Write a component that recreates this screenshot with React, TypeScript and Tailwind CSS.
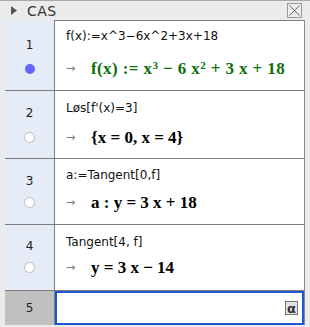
import React from 'react';

type Row = {
  n: number;
  input: string;
  output: React.ReactNode;
  active?: boolean;
  h: string;
  pt: string;
  gap: string;
  numMt: string;
  dotMt: string;
};

const sans = { fontFamily: '"DejaVu Sans", "Liberation Sans", sans-serif' };
const math = { fontFamily: '"Liberation Serif", "DejaVu Serif", serif' };

const rows: Row[] = [
  {
    n: 1,
    input: 'f(x):=x^3−6x^2+3x+18',
    active: true,
    h: 'h-[70px]',
    pt: 'pt-[7px]',
    gap: 'mt-[12px]',
    numMt: 'mt-[17px]',
    dotMt: 'mt-[11px]',
    output: (
      <span className="text-[#0b700b] tracking-[0.4px]">
        f(x) := x<sup className="text-[11px]">3</sup> − 6 x<sup className="text-[11px]">2</sup> + 3 x + 18
      </span>
    ),
  },
  {
    n: 2,
    input: 'Løs[f\'(x)=3]',
    h: 'h-[68px]',
    pt: 'pt-[9px]',
    gap: 'mt-[9px]',
    numMt: 'mt-[14px]',
    dotMt: 'mt-[11px]',
    output: <span>{'{'}x = 0, x = 4{'}'}</span>,
  },
  {
    n: 3,
    input: 'a:=Tangent[0,f]',
    h: 'h-[66px]',
    pt: 'pt-[8px]',
    gap: 'mt-[7px]',
    numMt: 'mt-[14px]',
    dotMt: 'mt-[8px]',
    output: <span>a : y = 3 x + 18</span>,
  },
  {
    n: 4,
    input: 'Tangent[4, f]',
    h: 'h-[66px]',
    pt: 'pt-[9px]',
    gap: 'mt-[5px]',
    numMt: 'mt-[13px]',
    dotMt: 'mt-[8px]',
    output: <span>y = 3 x − 14</span>,
  },
];

export default function App() {
  return (
    <div className="w-[310px] h-[327px] bg-[#ebebeb] overflow-hidden" style={sans}>
      {/* title bar */}
      <div className="h-[20px] border-t border-[#a8a8a8] flex items-center pl-[11px] pr-[8px]">
        <svg width="6" height="9" viewBox="0 0 6 9" className="mr-[10px]">
          <path d="M0 0 L6 4.5 L0 9 Z" fill="#555" />
        </svg>
        <span className="text-[14px] text-[#333] leading-none tracking-[0.5px]">CAS</span>
        <div className="ml-auto w-[15px] h-[15px] border border-[#9a9a9a] bg-[#ececec] flex items-center justify-center">
          <svg width="11" height="11" viewBox="0 0 11 11">
            <path d="M0.5 0.5 L10.5 10.5 M10.5 0.5 L0.5 10.5" stroke="#666" strokeWidth="1" />
          </svg>
        </div>
      </div>

      {/* cells */}
      <div className="mx-[5px] border-r border-[#8a8a8a]">
        {rows.map((r, i) => (
          <div key={r.n} className={`flex ${r.h} ${i > 0 ? 'border-t border-[#7d7d7d]' : ''}`}>
            <div className="w-[50px] shrink-0 bg-[#e5ecf7] border-r border-[#7d7d7d] flex flex-col items-center">
              <div className={`h-[16px] ${r.numMt} text-[12px] leading-[16px] text-[#222]`}>{r.n}</div>
              {r.active ? (
                <div className={`${r.dotMt} w-[10px] h-[10px] rounded-full bg-[#6464ff]`} />
              ) : (
                <div className={`${r.dotMt} w-[11px] h-[11px] rounded-full bg-white border border-[#bdbdbd]`} />
              )}
            </div>
            <div className={`flex-1 bg-white ${i === 0 ? 'border-t border-[#7d7d7d]' : ''} ${r.pt} pl-[11px]`}>
              <div className="h-[16px] text-[12px] leading-[16px] text-[#111] whitespace-pre">{r.input}</div>
              <div className={`${r.gap} flex items-center h-[26px]`}>
                <span className="text-[11px] text-[#7a7a7a] w-[25px]" style={sans}>→</span>
                <span className="text-[17px] font-bold text-black whitespace-pre" style={math}>
                  {r.output}
                </span>
              </div>
            </div>
          </div>
        ))}

        {/* input row */}
        <div className="flex h-[35px] border-t border-[#7d7d7d]">
          <div className="w-[50px] shrink-0 bg-[#c0c0c0] border-r border-[#7d7d7d] flex items-center justify-center text-[12px] text-[#222]">
            5
          </div>
          <div className="flex-1 bg-white border-2 border-[#1f56d2] flex items-center justify-end pr-[4px]">
            <div className="w-[13px] h-[14px] border border-[#777] bg-[#e2e2e2] flex items-center justify-center text-[13px] font-bold leading-none text-[#333]">
              α
            </div>
          </div>
        </div>
      </div>
    </div>
  );
}
